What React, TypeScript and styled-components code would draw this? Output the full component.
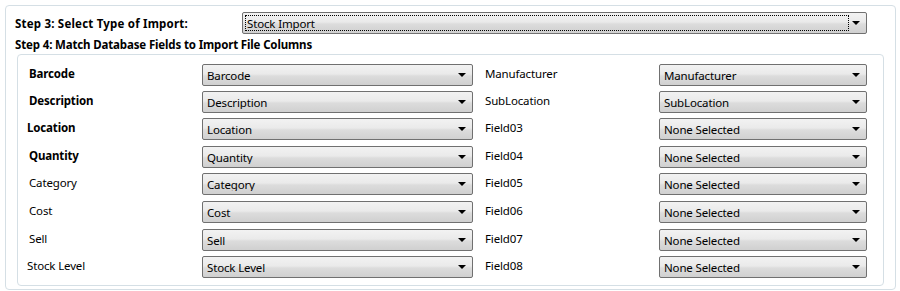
import * as React from "react";
import styled, { createGlobalStyle } from "styled-components";

const GlobalStyle = createGlobalStyle`
  html, body {
    margin: 0;
    padding: 0;
    background: #ffffff;
  }
  body {
    font-family: "Noto Sans", "Open Sans", sans-serif;
    font-size: 11.5px;
    letter-spacing: -0.15px;
    color: #000;
  }
`;

const OuterGroup = styled.section`
  box-sizing: border-box;
  margin: 5px 5px 0 5px;
  width: 891px;
  height: 285px;
  border: 1px solid #d5dfe5;
  border-radius: 4px;
  padding: 6px 0 0 9px;
`;

const StepRow = styled.div`
  display: grid;
  grid-template-columns: 227px 625px;
  align-items: center;
  height: 22px;
`;

const StepLabel = styled.div`
  font-weight: bold;
  letter-spacing: 0.2px;
  white-space: nowrap;
`;

const StepTitle = styled.div`
  font-weight: bold;
  margin-top: 2px;
  height: 18px;
  line-height: 18px;
  white-space: nowrap;
`;

const InnerGroup = styled.div`
  box-sizing: border-box;
  margin: 0 0 0 2px;
  width: 867px;
  height: 232px;
  border: 1px solid #d5dfe5;
  border-radius: 4px;
  padding: 9px 0 0 9px;
`;

const FieldGrid = styled.div`
  display: grid;
  grid-template-columns: 175px 271px 12px 174px 208px;
`;

const FieldRow = styled.div<{ $h: number }>`
  display: contents;
  & > * {
    height: ${(p) => p.$h}px;
  }
`;

const FieldLabel = styled.div<{ $bold?: boolean; $shift?: number }>`
  font-weight: ${(p) => (p.$bold ? "bold" : "normal")};
  line-height: 20px;
  padding-left: ${(p) => p.$shift ?? 0}px;
  white-space: nowrap;
`;

const Spacer = styled.div``;

const ComboBox = styled.div<{ $w: number }>`
  box-sizing: border-box;
  position: relative;
  width: ${(p) => p.$w}px;
  height: 22px;
  border: 1px solid #707070;
  border-radius: 2px;
  background: linear-gradient(to bottom, #f2f2f2 0%, #eaeaea 45%, #dcdcdc 55%, #d0d0d0 100%);
  display: flex;
  align-items: center;
  padding: 0 0 0 2px;
`;

const ComboText = styled.div<{ $focus?: boolean }>`
  box-sizing: border-box;
  flex: 1;
  height: 16px;
  line-height: 15px;
  padding-left: 1px;
  border: 1px dotted ${(p) => (p.$focus ? "#000" : "transparent")};
  margin-right: 17px;
  white-space: nowrap;
  overflow: hidden;
`;

const Arrow = styled.div`
  position: absolute;
  right: 6px;
  top: 8px;
  width: 0;
  height: 0;
  border-left: 4px solid transparent;
  border-right: 4px solid transparent;
  border-top: 4px solid #000;
`;

const Combo = ({ value, width, focus }: { value: string; width: number; focus?: boolean }) => (
  <ComboBox $w={width}>
    <ComboText $focus={focus}>{value}</ComboText>
    <Arrow />
  </ComboBox>
);

const rows = [
  { left: "Barcode", bold: true, shift: 2, right: "Manufacturer", rightValue: "Manufacturer", h: 27 },
  { left: "Description", bold: true, shift: 2, right: "SubLocation", rightValue: "SubLocation", h: 27 },
  { left: "Location", bold: true, shift: 0, right: "Field03", rightValue: "None Selected", h: 28 },
  { left: "Quantity", bold: true, shift: 2, right: "Field04", rightValue: "None Selected", h: 27 },
  { left: "Category", bold: false, shift: 2, right: "Field05", rightValue: "None Selected", h: 28 },
  { left: "Cost", bold: false, shift: 2, right: "Field06", rightValue: "None Selected", h: 28 },
  { left: "Sell", bold: false, shift: 2, right: "Field07", rightValue: "None Selected", h: 27 },
  { left: "Stock Level", bold: false, shift: 0, right: "Field08", rightValue: "None Selected", h: 27 },
];

export default function App() {
  return (
    <>
      <GlobalStyle />
      <OuterGroup>
        <StepRow>
          <StepLabel>Step 3: Select Type of Import:</StepLabel>
          <Combo value="Stock Import" width={625} focus />
        </StepRow>
        <StepTitle>Step 4: Match Database Fields to Import File Columns</StepTitle>
        <InnerGroup>
          <FieldGrid>
            {rows.map((r) => (
              <FieldRow key={r.left} $h={r.h}>
                <FieldLabel $bold={r.bold} $shift={r.shift}>{r.left}</FieldLabel>
                <div><Combo value={r.left} width={271} /></div>
                <Spacer />
                <FieldLabel>{r.right}</FieldLabel>
                <div><Combo value={r.rightValue} width={208} /></div>
              </FieldRow>
            ))}
          </FieldGrid>
        </InnerGroup>
      </OuterGroup>
    </>
  );
}
